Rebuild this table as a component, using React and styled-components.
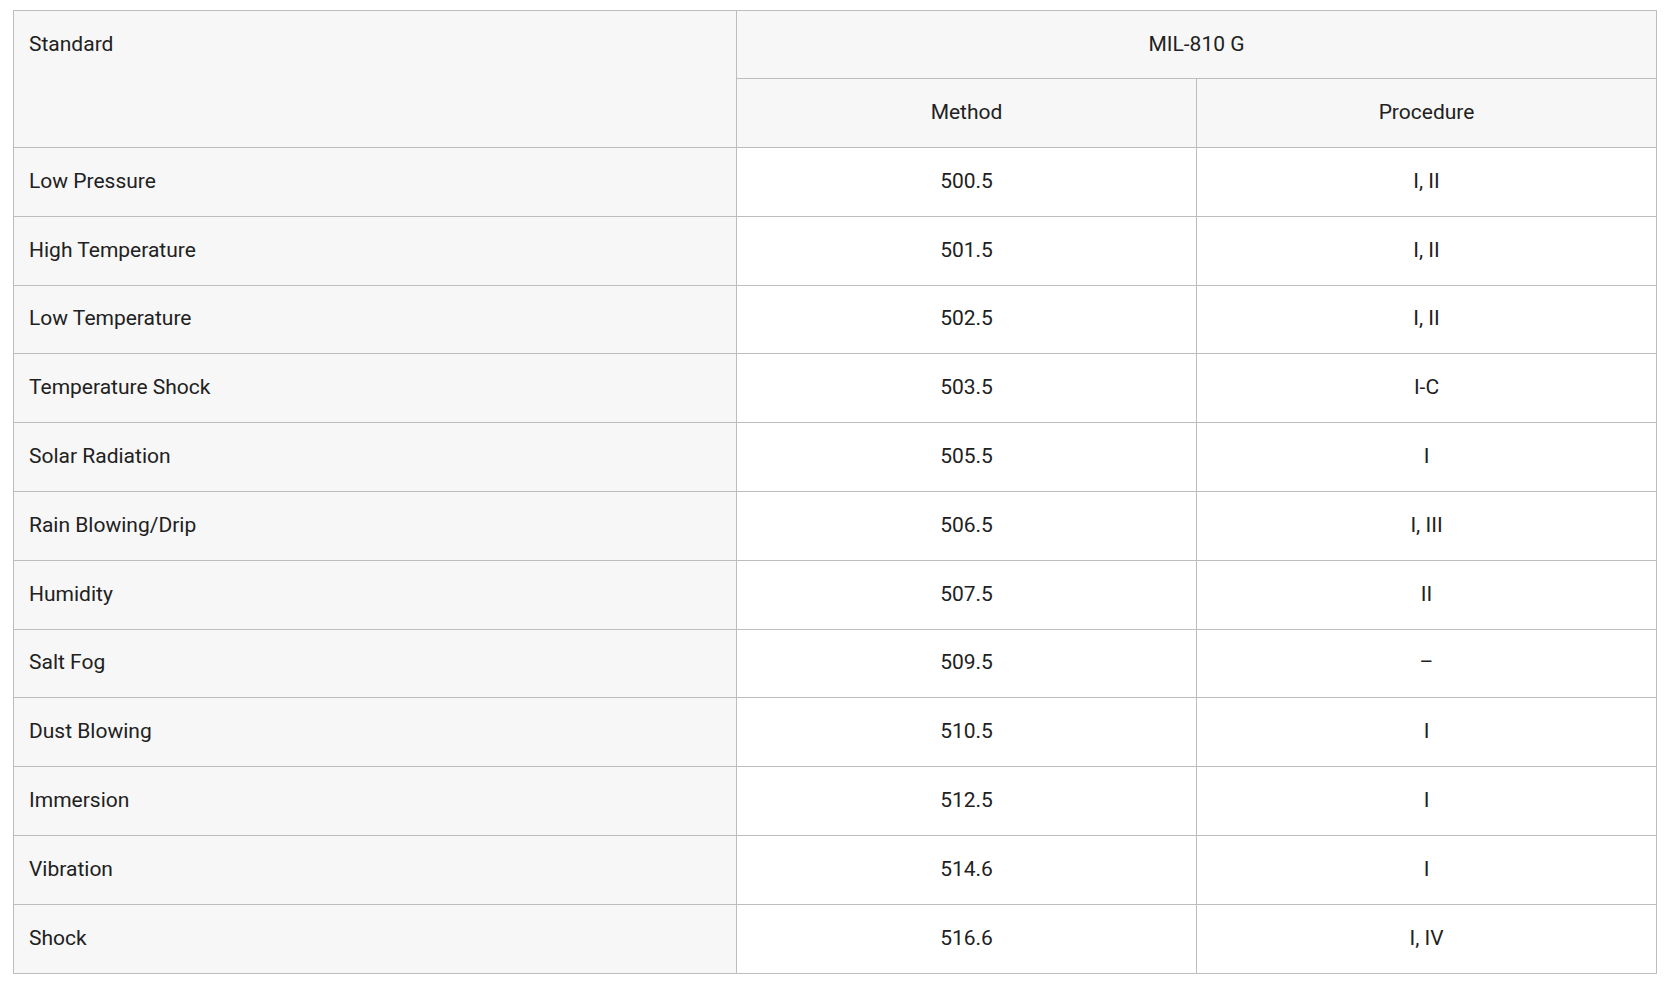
import React from "react";
import styled, { createGlobalStyle } from "styled-components";

const GlobalStyle = createGlobalStyle`
  body {
    margin: 0;
    background: #ffffff;
    font-family: Roboto, "Liberation Sans", sans-serif;
  }
`;

const rows = [
  { name: "Low Pressure", method: "500.5", procedure: "I, II" },
  { name: "High Temperature", method: "501.5", procedure: "I, II" },
  { name: "Low Temperature", method: "502.5", procedure: "I, II" },
  { name: "Temperature Shock", method: "503.5", procedure: "I-C" },
  { name: "Solar Radiation", method: "505.5", procedure: "I" },
  { name: "Rain Blowing/Drip", method: "506.5", procedure: "I, III" },
  { name: "Humidity", method: "507.5", procedure: "II" },
  { name: "Salt Fog", method: "509.5", procedure: "–" },
  { name: "Dust Blowing", method: "510.5", procedure: "I" },
  { name: "Immersion", method: "512.5", procedure: "I" },
  { name: "Vibration", method: "514.6", procedure: "I" },
  { name: "Shock", method: "516.6", procedure: "I, IV" },
];

export default function App() {
  return (
    <Page>
      <GlobalStyle />
      <SpecTable>
        <colgroup>
          <col style={{ width: 723 }} />
          <col style={{ width: 460 }} />
          <col style={{ width: 460 }} />
        </colgroup>
        <thead>
          <Row $height="68px">
            <Cell as="th" rowSpan={2} $shaded $top>
              Standard
            </Cell>
            <Cell as="th" colSpan={2} $shaded $center>
              MIL-810 G
            </Cell>
          </Row>
          <Row $height="69px">
            <Cell as="th" $shaded $center>
              Method
            </Cell>
            <Cell as="th" $shaded $center>
              Procedure
            </Cell>
          </Row>
        </thead>
        <tbody>
          {rows.map((r) => (
            <Row key={r.name}>
              <Cell $shaded>{r.name}</Cell>
              <Cell $center>{r.method}</Cell>
              <Cell $center>{r.procedure}</Cell>
            </Row>
          ))}
        </tbody>
      </SpecTable>
    </Page>
  );
}

const Page = styled.div`
  padding: 10px 9px 13px 13px;
`;

const SpecTable = styled.table`
  width: 1644px;
  border-collapse: collapse;
  table-layout: fixed;
  border: 1px solid #bdbdbd;
`;

const Row = styled.tr`
  height: ${(p) => p.$height || "68.8px"};
`;

const Cell = styled.td`
  border: 1px solid #bdbdbd;
  padding: 0 15px;
  padding-top: ${(p) => (p.$top ? "21px" : "0")};
  padding-bottom: ${(p) => (p.$top ? "0" : "2px")};
  vertical-align: ${(p) => (p.$top ? "top" : "middle")};
  text-align: ${(p) => (p.$center ? "center" : "left")};
  background: ${(p) => (p.$shaded ? "#f7f7f7" : "#ffffff")};
  color: #212121;
  font-size: 21px;
  font-weight: 400;
  line-height: 24px;
`;
